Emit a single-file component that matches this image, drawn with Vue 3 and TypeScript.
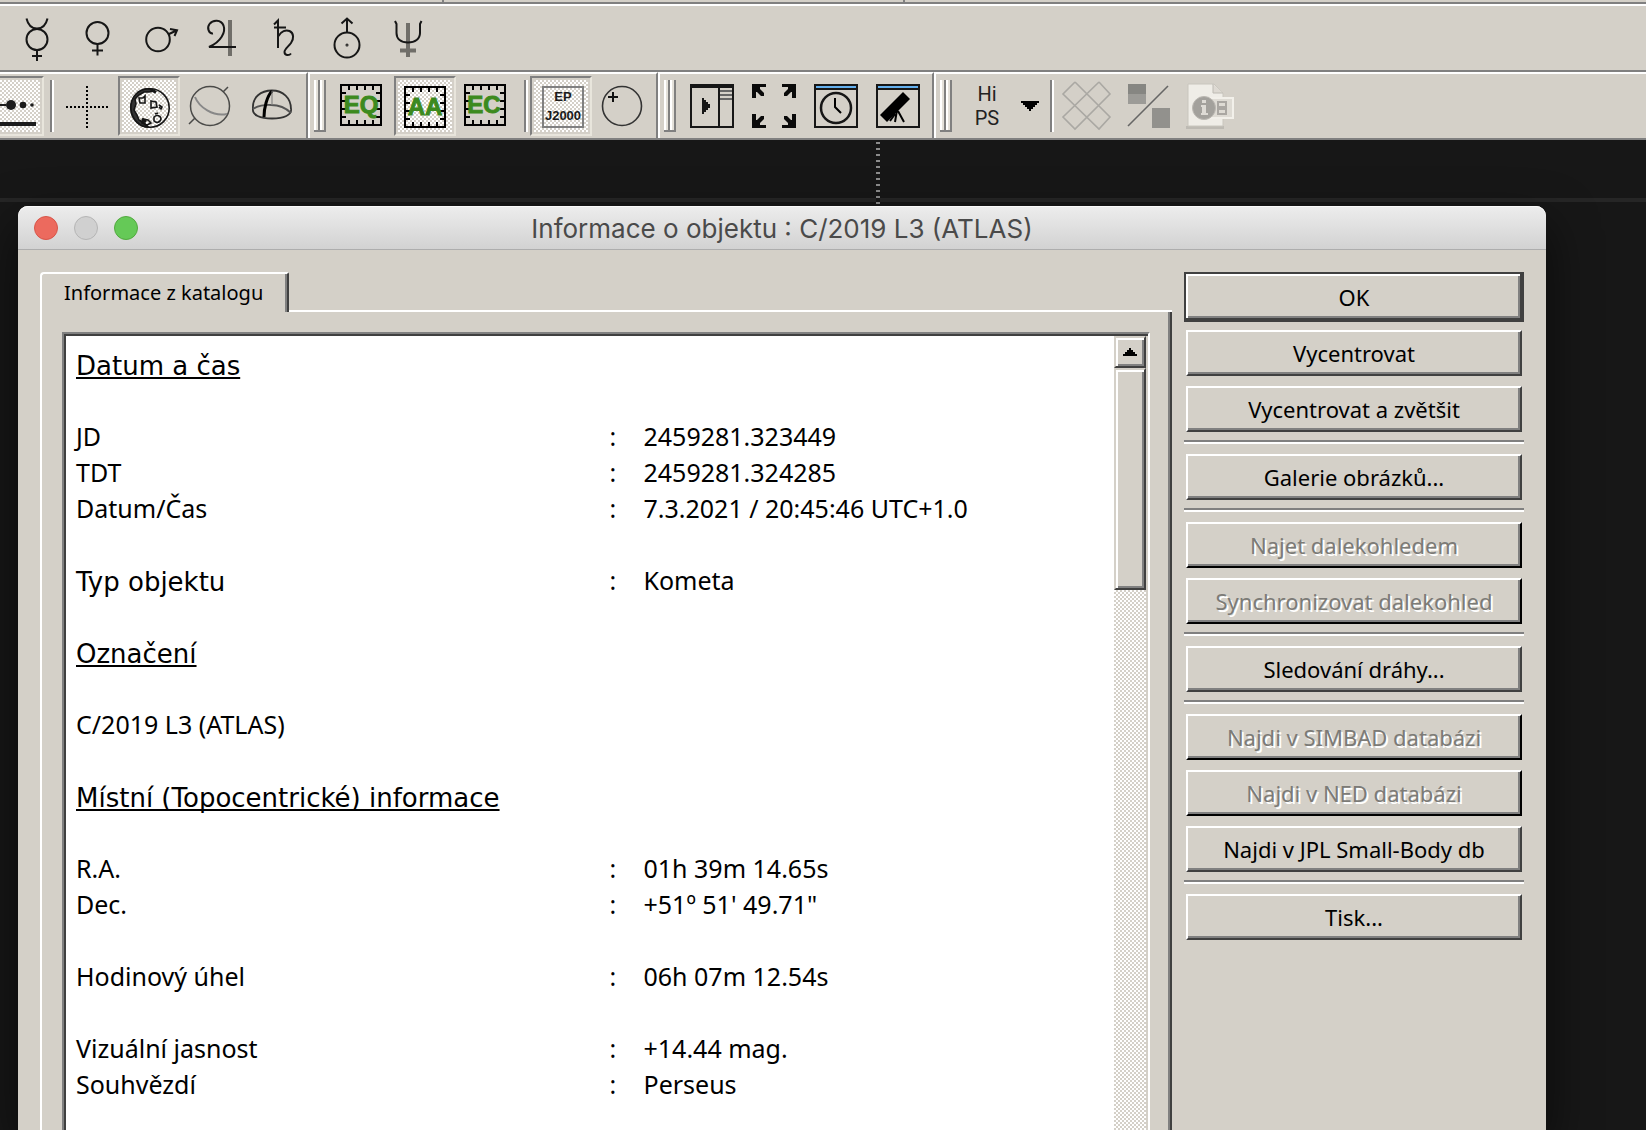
<script setup lang="ts">
interface Row {
  kind: 'pair' | 'heading' | 'text' | 'blank'
  label?: string
  value?: string
  wide?: boolean
}
interface Action {
  text: string
  disabled?: boolean
  primary?: boolean
}

const blank: Row = { kind: 'blank' }
const rows: Row[] = [
  { kind: 'heading', label: 'Datum a čas' },
  blank,
  { kind: 'pair', label: 'JD', value: '2459281.323449' },
  { kind: 'pair', label: 'TDT', value: '2459281.324285' },
  { kind: 'pair', label: 'Datum/Čas', value: '7.3.2021 / 20:45:46 UTC+1.0' },
  blank,
  { kind: 'pair', label: 'Typ objektu', value: 'Kometa', wide: true },
  blank,
  { kind: 'heading', label: 'Označení' },
  blank,
  { kind: 'text', label: 'C/2019 L3 (ATLAS)' },
  blank,
  { kind: 'heading', label: 'Místní (Topocentrické) informace' },
  blank,
  { kind: 'pair', label: 'R.A.', value: '01h 39m 14.65s' },
  { kind: 'pair', label: 'Dec.', value: '+51º 51\' 49.71"' },
  blank,
  { kind: 'pair', label: 'Hodinový úhel', value: '06h 07m 12.54s' },
  blank,
  { kind: 'pair', label: 'Vizuální jasnost', value: '+14.44 mag.' },
  { kind: 'pair', label: 'Souhvězdí', value: 'Perseus' },
]

const groups: Action[][] = [
  [{ text: 'OK', primary: true }, { text: 'Vycentrovat' }, { text: 'Vycentrovat a zvětšit' }],
  [{ text: 'Galerie obrázků...' }],
  [{ text: 'Najet dalekohledem', disabled: true }, { text: 'Synchronizovat dalekohled', disabled: true }],
  [{ text: 'Sledování dráhy...' }],
  [
    { text: 'Najdi v SIMBAD databázi', disabled: true },
    { text: 'Najdi v NED databázi', disabled: true },
    { text: 'Najdi v JPL Small-Body db' },
  ],
  [{ text: 'Tisk...' }],
]

// Ruler ticks drawn inside the 42px frame of the coordinate-grid icons.
const ticks = [8, 16, 24, 32]
</script>

<template>
  <div class="app">
    <div class="strip"><i></i><i></i><i></i></div>

    <div class="bar planets">
      <button class="tool" aria-label="Merkur">
        <svg viewBox="10 12 54 52" class="glyph"><circle cx="37" cy="39.5" r="10.5" /><path d="M26.500 18.500C28 25 32 28.500 37 28.500S46 25 47.500 18.500M37 50V61M32 56H42" /></svg>
      </button>
      <button class="tool" aria-label="Venuše">
        <svg viewBox="72 12 54 52" class="glyph"><circle cx="97.500" cy="33" r="11" /><path d="M97.500 44V55.500M92 50.500H103" /></svg>
      </button>
      <button class="tool" aria-label="Mars">
        <svg viewBox="134 12 54 52" class="glyph"><circle cx="158" cy="39.500" r="11.800" /><path d="M168 34.500L176.500 30.500M170 29L177 30.300L174.500 36" /></svg>
      </button>
      <button class="tool" aria-label="Jupiter">
        <svg viewBox="196 12 54 52" class="glyph"><path class="soft" d="M230 20V56" /><path d="M213 33.500C209 34 206.500 28 209.500 24C213 19.500 221 19.500 223.500 25.500C226 32 221 42 209 47H236" /></svg>
      </button>
      <button class="tool" aria-label="Saturn">
        <svg viewBox="258 12 54 52" class="glyph"><path d="M274 24.500L278 20.500V48M274 27.500H286M278.500 36C281 31 286 29.500 289.500 31C294 33 294 39 291 43C288 47 284.500 49 284.500 52C284.500 55.500 289 56 291 53.500" /></svg>
      </button>
      <button class="tool" aria-label="Uran">
        <svg viewBox="320 12 54 52" class="glyph"><circle cx="347" cy="45" r="12.500" /><circle cx="347" cy="45" r="0.500" /><path d="M347 32.500V19M341.500 23.500L347 18.500L352.500 23.500" /></svg>
      </button>
      <button class="tool" aria-label="Neptun">
        <svg viewBox="382 12 54 52" class="glyph"><path class="soft" d="M408 23V57M400 50.500H416" /><path d="M395 21L396.500 24V33C396.500 39 401 42.500 408 42.500S420 39 420 33V24L421.500 21" /></svg>
      </button>
    </div>

    <div class="bar tools">
      <div class="group first">
        <button class="tool pressed" aria-label="Řez">
          <svg viewBox="-14 80 54 52"><g fill="#1c1c1c"><circle cx="11" cy="105" r="5" /><circle cx="23" cy="105" r="3.300" /><circle cx="32" cy="105" r="1.800" /><path d="M-12 104H6V106H-12zM-12 122H36V126H-12z" /></g></svg>
        </button>
        <span class="sep"></span>
        <button class="tool" aria-label="Zaměřovací kříž">
          <svg viewBox="60 80 54 52" shape-rendering="crispEdges"><path d="M66 107H109M87 86V129" fill="none" stroke="#000" stroke-width="2" stroke-dasharray="2" /></svg>
        </button>
        <button class="tool pressed" aria-label="Měsíc">
          <svg viewBox="122 80 54 52" fill="none" stroke="#161616" stroke-width="1.600">
            <circle cx="150" cy="108" r="19.200" />
            <path fill="#333" d="M150 89C138 88 130 98 131 109C132 120 140 127 148 127L144 123L139 120L137 115L134 110L136 104L135 99L139 95L144 92L149 92L154 91z" />
            <path d="M139 98l4 0l2-2v7l-5 0zM151 101l5 1l1 5l-6 1zM143 119l5 1l3 3l-4 2l-5-2zM154 117c3-3 7-1 7 2c-1 4-5 4-7 2zM159 105l3 2l-1 2l-2-2M155 114l3-1" />
            <path d="M151 89.500l5 3M142 119l4 3" stroke-width="3" />
          </svg>
        </button>
        <button class="tool" aria-label="Nebeská sféra">
          <svg viewBox="184 80 54 52" fill="none" stroke="#4a4a48" stroke-width="1.500"><circle cx="210" cy="106" r="19.500" /><path stroke="#888" stroke-width="2" d="M195 97C199 107 213 117 227 114" /><path d="M223 92l5-5M189 124l6-6" /></svg>
        </button>
        <button class="tool" aria-label="Horizont">
          <svg viewBox="246 80 54 52" fill="none" stroke="#333" stroke-width="1.800"><path d="M253 109C252 97 261 90.500 272 90.500S291 98 291 109" /><path d="M253 109C252 115 260 118.500 272 118.500S292 115 291 109" /><path stroke="#555" d="M253 109C257 106 265 104.500 271 105C280 105 287 109 291 113" /><path stroke="#000" stroke-width="3" d="M272 91C267 96 264 108 264 117" /><path stroke="#777" stroke-width="1" d="M272 91V105" /></svg>
        </button>
      </div>

      <div class="group">
        <span class="grip"></span>
        <button class="tool" aria-label="Rovníkové souřadnice">
          <svg viewBox="4 4 54 52"><g transform="translate(8 8)"><g class="frame"><rect x="1" y="1" width="40" height="40" /><path v-for="t in ticks" :key="t" :d="`M${t + 1} 2V6M${t + 1} 36V40M2 ${t + 1}H6M36 ${t + 1}H40`" /></g><text class="grid" x="21" y="29">EQ</text></g></svg>
        </button>
        <button class="tool pressed" aria-label="Obzorníkové souřadnice">
          <svg viewBox="4 4 54 52"><g transform="translate(10 10)"><g class="frame"><rect x="1" y="1" width="40" height="40" /><path v-for="t in ticks" :key="t" :d="`M${t + 1} 2V6M${t + 1} 36V40M2 ${t + 1}H6M36 ${t + 1}H40`" /></g><text class="grid" x="21" y="29">AA</text></g></svg>
        </button>
        <button class="tool" aria-label="Ekliptikální souřadnice">
          <svg viewBox="4 4 54 52"><g transform="translate(8 8)"><g class="frame"><rect x="1" y="1" width="40" height="40" /><path v-for="t in ticks" :key="t" :d="`M${t + 1} 2V6M${t + 1} 36V40M2 ${t + 1}H6M36 ${t + 1}H40`" /></g><text class="grid" x="20" y="29">EC</text></g></svg>
        </button>
        <span class="sep"></span>
        <button class="tool pressed" aria-label="Epocha J2000">
          <svg viewBox="534 80 54 52"><rect x="543" y="87" width="40" height="40" fill="none" stroke="#808080" stroke-width="2" /><text class="epoch" x="563" y="101">EP</text><text class="epoch" x="563" y="120">J2000</text></svg>
        </button>
        <button class="tool" aria-label="Pól">
          <svg viewBox="596 80 54 52" fill="none" stroke="#333" stroke-width="1.600"><circle cx="622" cy="106" r="19.500" /><path stroke="#111" stroke-width="2" d="M608 97H618M613 92V102" /></svg>
        </button>
      </div>

      <div class="group">
        <span class="grip"></span>
        <button class="tool" aria-label="Panel">
          <svg viewBox="686 80 54 52" shape-rendering="crispEdges"><path fill="none" stroke="#161616" stroke-width="2" d="M691 86H733V127H691zM719 86V127" /><path fill="#161616" d="M690 84H734V88H690zM702 98h2v2h2v2h2v2h2v4h-2v2h-2v2h-2v2h-2z" /><path fill="#666" d="M720 90h12v2h-12zM720 94h12v2h-12zM720 98h12v2h-12z" /></svg>
        </button>
        <button class="tool" aria-label="Celá obrazovka">
          <svg viewBox="4 4 54 52"><g transform="translate(8 8)" fill="#0a0a0a"><path id="corner" d="M0 0H14V3H8V5L12 9V12H9L5 8H4V14H0z" /><use href="#corner" transform="translate(44 0) scale(-1 1)" /><use href="#corner" transform="translate(0 44) scale(1 -1)" /><use href="#corner" transform="translate(44 44) scale(-1 -1)" /></g></svg>
        </button>
        <button class="tool" aria-label="Čas">
          <svg viewBox="810 80 54 52"><g shape-rendering="crispEdges"><path fill="#64b0ee" d="M816 86H856V88H816z" /><path fill="none" stroke="#161616" stroke-width="2" d="M815 85H857V127H815zM816 89H856" /></g><circle cx="836" cy="108" r="15" fill="none" stroke="#161616" stroke-width="2.500" /><path fill="none" stroke="#000" stroke-width="2" d="M835 98V107L841 113" /></svg>
        </button>
        <button class="tool" aria-label="Dalekohled">
          <svg viewBox="872 80 54 52"><g shape-rendering="crispEdges"><path fill="#64b0ee" d="M878 86H918V88H878z" /><path fill="none" stroke="#161616" stroke-width="2" d="M877 85H919V127H877zM878 89H918" /></g><path d="M880 115L903 92L910 99L887 122z" /><path fill="none" stroke="#000" stroke-width="2" d="M897 110L895 122M898 111L904 122M895 114L890 121" /></svg>
        </button>
      </div>

      <div class="group last">
        <span class="grip"></span>
        <button class="tool hips">Hi<br />PS</button>
        <button class="drop" aria-label="Nabídka HiPS"><svg viewBox="0 0 18 10" shape-rendering="crispEdges"><path d="M0 0H18V2H16V4H14V6H12V8H10V10H8V8H6V6H4V4H2V2H0z" /></svg></button>
        <span class="sep"></span>
        <button class="tool" aria-label="Síť" disabled>
          <svg viewBox="1060 80 54 52" fill="none" stroke="#aaa8a3" stroke-width="1.600"><path d="M1075 82L1063 94L1099 129L1110 117L1075 82M1099 82L1110 94L1075 129L1063 117L1099 82" /></svg>
        </button>
        <button class="tool" aria-label="Kontrast" disabled>
          <svg viewBox="1122 80 54 52"><path fill="#868682" d="M1128 84h18v10h-18z" /><path fill="#9c9b97" d="M1128 94h18v10h-18z" /><path fill="#92918d" d="M1152 108h18v20h-18z" /><path stroke="#666" stroke-width="1.600" d="M1128 126L1168 86" /></svg>
        </button>
        <button class="tool" aria-label="Informace" disabled>
          <svg viewBox="1184 80 54 52">
            <path fill="#bdbab3" d="M1186 126H1224V129H1186z" /><path fill="#efede7" stroke="#c9c6be" d="M1188 84H1214L1223 93V126H1188z" /><path fill="#ddd9d2" stroke="#bdbab3" d="M1213 84V93H1223" />
            <rect x="1208" y="98" width="25" height="20" fill="#dedbd4" stroke="#f2f0ea" stroke-width="2" />
            <path fill="none" stroke="#aaa7a2" stroke-width="2" d="M1218 102h8v5h-8zM1218 109h8v5h-8z" /><circle cx="1204" cy="108" r="11.500" fill="#a3a19c" stroke="#bbb8b2" />
            <path fill="#dedbd5" d="M1202 100h4v3h-4zM1201 105h5v8h2v2h-7v-2h1v-6h-1z" />
          </svg>
        </button>
      </div>
    </div>

    <main class="sky">
      <section class="dialog" role="dialog" aria-labelledby="title">
        <header class="title">
          <div class="lights">
            <button class="light red" aria-label="Zavřít"></button><button class="light off" aria-label="Minimalizovat" disabled></button><button class="light green" aria-label="Zvětšit"></button>
          </div>
          <h1 id="title">Informace o objektu : C/2019 L3 (ATLAS)</h1>
        </header>
        <div class="content">
          <div class="notebook">
            <div class="tabs" role="tablist">
              <button class="tab" role="tab" aria-selected="true">Informace z katalogu</button>
              <span class="rule"></span>
            </div>
            <div class="page" role="tabpanel">
              <div class="well">
                <div class="text">
                  <table>
                    <colgroup><col class="c-label" /><col class="c-colon" /><col /></colgroup>
                    <tbody>
                      <tr v-for="(row, i) in rows" :key="i">
                        <template v-if="row.kind === 'pair'">
                          <th scope="row" :class="{ wide: row.wide }">{{ row.label }}</th>
                          <td>:</td>
                          <td>{{ row.value }}</td>
                        </template>
                        <th v-else-if="row.kind === 'heading'" colspan="3" class="wide heading">{{ row.label }}</th>
                        <td v-else colspan="3">{{ row.label }}</td>
                      </tr>
                    </tbody>
                  </table>
                </div>
                <div class="scroll">
                  <button class="up" aria-label="Nahoru"><svg viewBox="0 0 14 8" shape-rendering="crispEdges"><path d="M6 0H8V2H10V4H12V6H14V8H0V6H2V4H4V2H6z" /></svg></button>
                  <div class="thumb"></div>
                </div>
              </div>
            </div>
          </div>
          <aside class="actions">
            <div v-for="(group, g) in groups" :key="g" class="set">
              <button v-for="a in group" :key="a.text" class="action" :class="{ primary: a.primary }" :disabled="a.disabled">{{ a.text }}</button>
            </div>
          </aside>
        </div>
      </section>
    </main>
  </div>
</template>

<style>
body {
  margin: 0;
  background: #171717;
}
</style>

<style scoped>
* {
  box-sizing: border-box;
}
.app {
  display: flex;
  flex-direction: column;
  height: 100vh;
  overflow: hidden;
  background: #171717;
  color: #000;
  font-family: "Noto Sans", "Open Sans", sans-serif;
  font-size: 25px;
}
button {
  margin: 0;
  padding: 0;
  border: 0;
  background: none;
  color: inherit;
  font: inherit;
}
.strip {
  display: flex;
  flex: none;
  height: 6px;
  background: #d4d0c8;
  border-bottom: 2px solid #fff;
  box-shadow: inset 0 -2px #808080;
}
.strip i {
  width: 28%;
  height: 2px;
  border-right: 2px solid #808080;
}
.strip i:first-child {
  width: 27%;
}
.strip i:last-child {
  border: 0;
}
.bar {
  display: flex;
  flex: none;
  background: #d4d0c8;
}
.planets {
  align-items: center;
  height: 64px;
  padding-left: 6px;
}
.tools {
  height: 70px;
  border-top: 2px solid #808080;
  border-bottom: 2px solid #808080;
}
.group {
  display: flex;
  align-items: center;
  padding-right: 2px;
  border-top: 2px solid #fff;
  border-left: 2px solid #fff;
  border-right: 2px solid #808080;
}
.first {
  margin-left: -20px;
}
.last {
  flex: 1;
  border-right: 0;
}
.tool {
  flex: none;
  width: 62px;
  height: 60px;
  padding: 2px;
  border: 2px solid transparent;
}
.tool svg {
  display: block;
  width: 54px;
  height: 52px;
  overflow: visible;
}
.pressed {
  border-color: #808080 #e8e5dc #e8e5dc #808080;
  background: repeating-conic-gradient(#fff 0 25%, #d4d0c8 0 50%) 0 0 / 4px 4px content-box content-box;
}
.sep {
  width: 4px;
  height: 52px;
  margin: 0 2px 0 6px;
  border-left: 2px solid #808080;
  border-right: 2px solid #fff;
}
.grip {
  width: 12px;
  height: 52px;
  margin: 0 6px 0 4px;
  border-bottom: 2px solid #808080;
  background: repeating-linear-gradient(90deg, #fff 0 2px, #e4e1da 2px 4px, #808080 4px 6px);
}
.glyph {
  fill: none;
  stroke: #161616;
  stroke-width: 2;
}
.glyph .soft {
  stroke: #706e69;
  stroke-width: 4;
}
.frame {
  fill: none;
  stroke: #000;
  stroke-width: 2;
  shape-rendering: crispEdges;
}
.grid {
  fill: #3c8a1e;
  stroke: #3c8a1e;
  stroke-width: 1;
  font: bold 24px "Liberation Sans", sans-serif;
  text-anchor: middle;
}
.epoch {
  fill: #1a1a1a;
  font: bold 13px "Liberation Sans", sans-serif;
  text-anchor: middle;
}
.hips {
  width: 58px;
  color: #222;
  font-family: Roboto, sans-serif;
  font-size: 20px;
  line-height: 24px;
}
.drop {
  width: 28px;
  height: 60px;
}
.drop svg {
  display: block;
  width: 18px;
  margin: 0 auto;
}
.sky {
  display: flex;
  flex: 1;
  min-height: 0;
  padding: 66px 100px 0 18px;
  background:
    repeating-linear-gradient(#171717 0 2px, #8c8c8c 2px 4px, #171717 4px 6px) 876px 0 / 4px 66px no-repeat,
    linear-gradient(#262626, #262626) 0 58px / 100% 4px no-repeat,
    #171717;
}
.dialog {
  display: flex;
  flex: 1;
  flex-direction: column;
  min-width: 0;
  border-radius: 10px 10px 0 0;
  background: #d4d0c8;
  box-shadow: 0 20px 50px rgba(0, 0, 0, 0.6);
}
.title {
  position: relative;
  display: flex;
  flex: none;
  align-items: center;
  justify-content: center;
  height: 44px;
  border-bottom: 1px solid #adadad;
  border-radius: 10px 10px 0 0;
  background: linear-gradient(#ededed, #d2d2d2);
  box-shadow: inset 0 1px #fafafa;
}
h1 {
  margin: 0;
  padding-top: 2px;
  color: #4a4a4a;
  font: 400 26px/32px Inter, sans-serif;
}
.lights {
  position: absolute;
  left: 16px;
  display: flex;
  gap: 16px;
}
.light {
  width: 24px;
  height: 24px;
  border: 1px solid;
  border-radius: 50%;
}
.red {
  border-color: #d85549;
  background: #ec6a5e;
}
.off {
  border-color: #b5b5b5;
  background: #d0d0d0;
}
.green {
  border-color: #52a93f;
  background: #65c957;
}
.content {
  display: flex;
  flex: 1;
  gap: 12px;
  min-height: 0;
  padding: 22px 22px 0;
}
.notebook {
  display: flex;
  flex: 1;
  flex-direction: column;
  min-width: 0;
}
.tabs {
  display: flex;
  flex: none;
  align-items: flex-end;
}
.tab {
  height: 40px;
  padding: 0 24px 0 22px;
  border: 2px solid #fff;
  border-right-color: #404040;
  border-bottom: 0;
  border-radius: 4px 2px 0 0;
  box-shadow: inset -2px 0 #808080;
  font-size: 20px;
  line-height: 38px;
  white-space: nowrap;
}
.rule {
  flex: 1;
  height: 2px;
  background: #fff;
}
.page {
  display: flex;
  flex: 1;
  min-height: 0;
  padding: 20px 20px 0;
  border-left: 2px solid #fff;
  border-right: 2px solid #404040;
  box-shadow: inset -2px 0 #808080;
}
.well {
  display: flex;
  flex: 1;
  min-width: 0;
  padding: 2px 2px 0;
  border: 2px solid #808080;
  border-right-color: #fff;
  border-bottom: 0;
  box-shadow: inset 2px 2px #404040;
}
.text {
  flex: 1;
  min-width: 0;
  padding: 10px 12px 0 10px;
  overflow: hidden;
  background: #fff;
}
table {
  width: 100%;
  table-layout: fixed;
  border-collapse: collapse;
}
.c-label {
  width: 52%;
}
.c-colon {
  width: 34px;
}
th,
td {
  height: 36px;
  padding: 0;
  font-weight: 400;
  line-height: 36px;
  text-align: left;
  white-space: nowrap;
}
.wide {
  padding-top: 4px;
  font-family: "DejaVu Sans", sans-serif;
  font-size: 26px;
  line-height: 32px;
}
.heading {
  text-decoration: underline 2px;
  text-decoration-skip-ink: none;
  text-underline-offset: 2px;
}
.scroll {
  display: flex;
  flex: none;
  flex-direction: column;
  width: 32px;
  background: repeating-conic-gradient(#fff 0 25%, #d4d0c8 0 50%) 0 0 / 4px 4px;
}
.up,
.thumb {
  height: 32px;
  border: 2px solid #d4d0c8;
  border-right-color: #404040;
  border-bottom-color: #404040;
  background: #d4d0c8;
  box-shadow: inset 2px 2px #fff, inset -2px -2px #808080;
}
.thumb {
  height: 222px;
}
.up svg {
  display: block;
  width: 14px;
  margin: 0 auto;
}
.actions {
  flex: none;
  width: 340px;
}
.set {
  display: flex;
  flex-direction: column;
  gap: 10px;
  padding: 0 2px;
}
.set + .set {
  margin-top: 8px;
  padding-top: 12px;
  border-top: 2px solid #808080;
  box-shadow: inset 0 2px #fff;
}
.action {
  height: 46px;
  border: 2px solid #fff;
  border-right-color: #404040;
  border-bottom-color: #404040;
  box-shadow: inset -2px -2px #808080;
  font-size: 22px;
  line-height: 40px;
}
.primary {
  height: 50px;
  margin: 0 -2px -2px;
  border-color: #404040;
  box-shadow: inset -2px -2px #404040, inset 2px 2px #fff, inset -4px -4px #808080;
  line-height: 46px;
}
.action:disabled {
  border-right-color: #000;
  border-bottom-color: #000;
  color: #7c7b77;
  text-shadow: 2px 2px #fff;
}
</style>
